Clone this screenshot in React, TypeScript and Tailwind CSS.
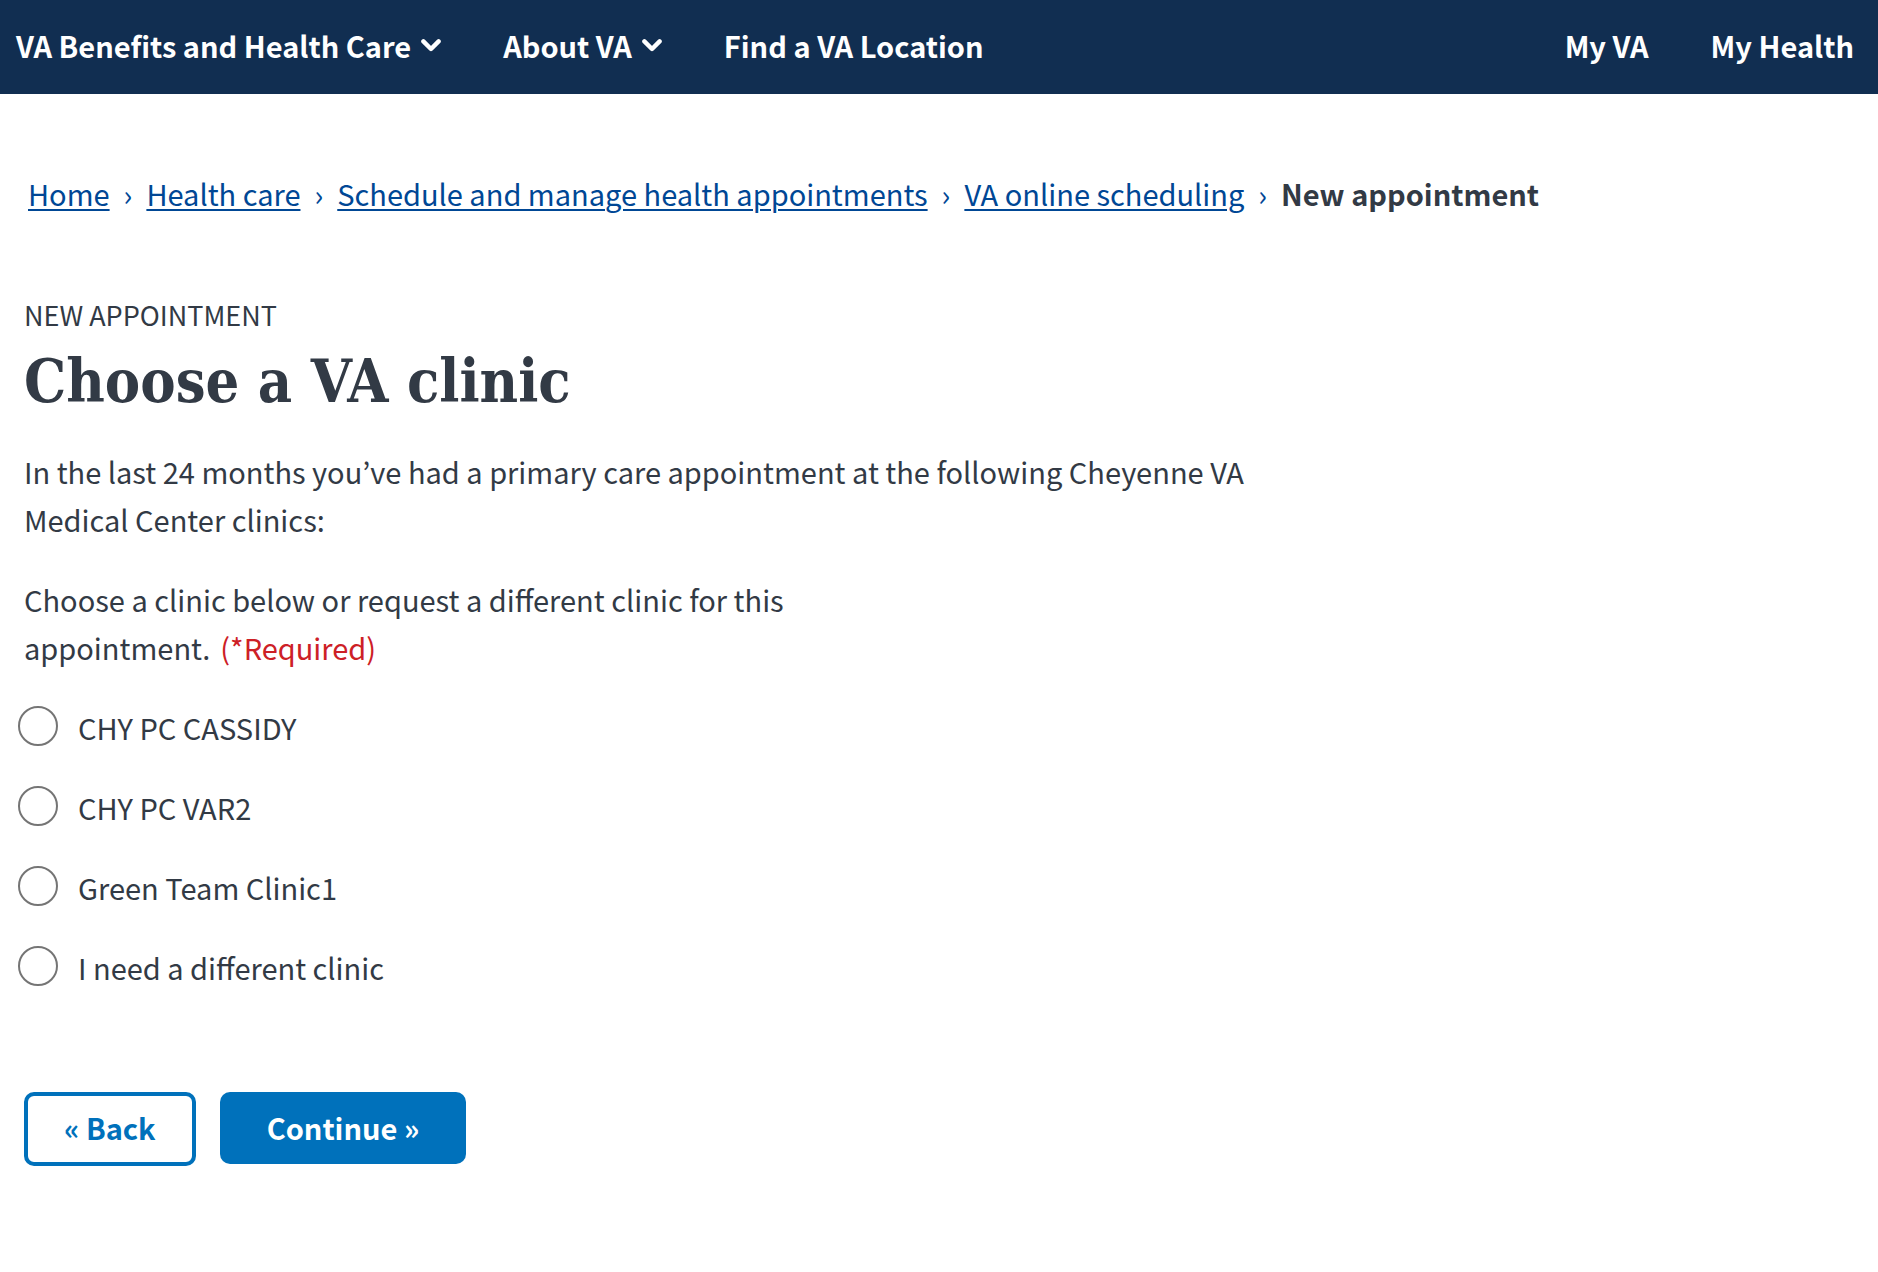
const clinics = ['CHY PC CASSIDY', 'CHY PC VAR2', 'Green Team Clinic1', 'I need a different clinic'];

const crumbs = ['Home', 'Health care', 'Schedule and manage health appointments', 'VA online scheduling'];

function Chevron() {
  return (
    <svg viewBox="0 0 20 14" className="h-3.5 w-5" fill="none" aria-hidden="true">
      <path
        d="M2.4 3.4 L10 11 L17.6 3.4"
        stroke="currentColor"
        strokeWidth="4.4"
        strokeLinecap="round"
        strokeLinejoin="round"
      />
    </svg>
  );
}

export default function App() {
  return (
    <div className="min-h-screen bg-white font-['Noto_Sans_CJK_KR',sans-serif] text-[29px] leading-[48px] text-[#323a45]">
      <header className="bg-[#112e51] text-white">
        <nav className="flex items-center justify-between pt-[21px] pr-6 pb-[25px] pl-4 font-bold" aria-label="Main">
          <div className="flex items-center gap-[62px]">
            <button type="button" className="flex items-center gap-2.5">
              VA Benefits and Health Care
              <Chevron />
            </button>
            <button type="button" className="flex items-center gap-2.5">
              About VA
              <Chevron />
            </button>
            <a href="#find">Find a VA Location</a>
          </div>
          <div className="flex items-center gap-[62px]">
            <a href="#my-va">My VA</a>
            <a href="#my-health">My Health</a>
          </div>
        </nav>
      </header>

      <nav aria-label="Breadcrumb" className="px-7 pt-[75px]">
        <ol className="flex flex-wrap items-center">
          {crumbs.map((crumb) => (
            <li key={crumb} className="flex items-center text-[#004795]">
              <a href="#crumb" className="underline decoration-2 underline-offset-3">
                {crumb}
              </a>
              <span className="px-3.5" aria-hidden="true">
                ›
              </span>
            </li>
          ))}
          <li className="font-bold" aria-current="page">
            New appointment
          </li>
        </ol>
      </nav>

      <main className="px-6 pt-[78px] pb-24">
        <p className="text-[27px] leading-10 uppercase">New appointment</p>
        <h1 className="pt-3.5 font-['DejaVu_Serif_Condensed','DejaVu_Serif',serif] text-[59px] leading-[66px] font-bold">
          Choose a VA clinic
        </h1>
        <p className="max-w-[1240px] pt-8">
          In the last 24 months you’ve had a primary care appointment at the following Cheyenne VA Medical Center
          clinics:
        </p>
        <form className="pt-8">
          <fieldset>
            <legend className="max-w-[800px]">
              Choose a clinic below or request a different clinic for this appointment.
              <span className="pl-2.5 text-[#cd2026]">(*Required)</span>
            </legend>
            <div className="-ml-1.5 flex flex-col gap-8 pt-8">
              {clinics.map((clinic) => (
                <label key={clinic} className="flex items-start gap-5">
                  <input
                    type="radio"
                    name="clinic"
                    className="mt-[3px] size-10 shrink-0 appearance-none rounded-full border-2 border-[#757575] bg-white checked:bg-[#0071bb]"
                  />
                  {clinic}
                </label>
              ))}
            </div>
          </fieldset>
          <div className="flex items-start gap-6 pt-[101px]">
            <button
              type="button"
              className="rounded-[10px] border-4 border-[#0071bb] px-9 pt-[7px] pb-[11px] font-bold text-[#0071bb]"
            >
              « Back
            </button>
            <button
              type="submit"
              className="rounded-[10px] bg-[#0071bb] px-[47px] pt-[11px] pb-[13px] font-bold text-white"
            >
              Continue »
            </button>
          </div>
        </form>
      </main>
    </div>
  );
}
